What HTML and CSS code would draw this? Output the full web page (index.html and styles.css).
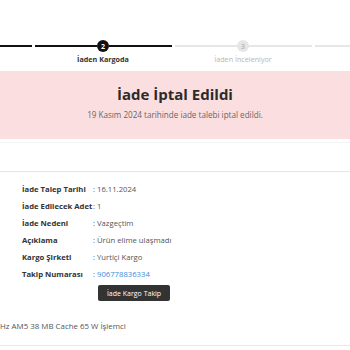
FILE: index.html
```html
<!DOCTYPE html>
<html lang="tr">
<head>
    <meta charset="UTF-8">
    <meta name="viewport" content="width=device-width, initial-scale=1.0">
    <title>İade Detayı</title>
    <link rel="stylesheet" href="styles.css">
</head>
<body>
    <!-- Progress steps (first and last step sit outside the visible area) -->
    <div class="stepper">
        <div class="step done">
            <div class="track"><span class="line"></span><span class="dot"></span><span class="line"></span></div>
            <div class="step-label">&nbsp;</div>
        </div>
        <div class="step current">
            <div class="track"><span class="line"></span><span class="dot">2</span><span class="line"></span></div>
            <div class="step-label">İaden Kargoda</div>
        </div>
        <div class="step">
            <div class="track"><span class="line"></span><span class="dot">3</span><span class="line"></span></div>
            <div class="step-label">İaden İnceleniyor</div>
        </div>
        <div class="step">
            <div class="track"><span class="line"></span><span class="dot"></span><span class="line"></span></div>
            <div class="step-label">&nbsp;</div>
        </div>
    </div>

    <div class="status-box">
        <h2>İade İptal Edildi</h2>
        <p>19 Kasım 2024 tarihinde iade talebi iptal edildi.</p>
    </div>

    <div class="spacer"></div>

    <div class="details">
        <div class="row"><span class="label">İade Talep Tarihi</span><span class="value">: 16.11.2024</span></div>
        <div class="row"><span class="label">İade Edilecek Adet</span><span class="value">: 1</span></div>
        <div class="row"><span class="label">İade Nedeni</span><span class="value">: Vazgeçtim</span></div>
        <div class="row"><span class="label">Açıklama</span><span class="value">: Ürün elime ulaşmadı</span></div>
        <div class="row"><span class="label">Kargo Şirketi</span><span class="value">: Yurtiçi Kargo</span></div>
        <div class="row"><span class="label">Takip Numarası</span><span class="value">: <a href="#" class="track-no">906778836334</a></span></div>
        <button class="track-btn">İade Kargo Takip</button>
    </div>

    <div class="product">Hz AM5 38 MB Cache 65 W İşlemci</div>
</body>
</html>
```

FILE: styles.css
```css
body {
    margin: 0;
    width: 350px;
    overflow: hidden;
    background-color: #ffffff;
    font-family: "Open Sans", Arial, sans-serif;
    color: #333333;
}

/* Progress steps */
.stepper {
    display: flex;
    margin-left: -107px;
    padding-top: 39px;
}
.step {
    flex: 0 0 140px;
    padding: 0 1.5px;
    box-sizing: border-box;
}
.track {
    display: flex;
    align-items: center;
    height: 14px;
}
.line {
    flex: 1;
    height: 2px;
    background: #e6e6e6;
}
.dot {
    width: 12px;
    height: 12px;
    border-radius: 50%;
    background: #e6e6e6;
    color: #bdbdbd;
    font-size: 7px;
    font-weight: 700;
    display: flex;
    align-items: center;
    justify-content: center;
}
.step.done .line,
.step.current .line {
    background: #111111;
}
.step.done .dot,
.step.current .dot {
    background: #111111;
    color: #ffffff;
}
.step-label {
    text-align: center;
    font-size: 7.2px;
    line-height: 11px;
    color: #b5b5b5;
    margin-top: 1px;
}
.step.current .step-label {
    color: #333333;
    font-weight: 700;
}

/* Cancelled box */
.status-box {
    margin-top: 6px;
    background: #fbdfe0;
    text-align: center;
    padding: 13px 0 19px;
}
.status-box h2 {
    margin: 0;
    font-size: 15px;
    line-height: 20px;
    font-weight: 700;
    color: #2b2b2b;
}
.status-box p {
    margin: 5px 0 0;
    font-size: 8.1px;
    line-height: 11px;
    color: #666666;
}

.spacer {
    height: 28px;
    margin-top: 3px;
    border-top: 1px solid #f4f4f4;
    border-bottom: 1px solid #e6e6e6;
}

/* Return details */
.details {
    padding: 8px 0 0 22px;
}
.row {
    display: flex;
    height: 17px;
    align-items: center;
    font-size: 7.7px;
}
.label {
    flex: 0 0 auto;
    min-width: 71px;
    white-space: nowrap;
    font-weight: 700;
    color: #333333;
}
.value {
    color: #555555;
}
.track-no {
    color: #3d8ed9;
    text-decoration: none;
}
.track-btn {
    display: block;
    margin: 3px 0 0 76px;
    width: 72px;
    height: 16px;
    padding: 0;
    background: #333333;
    color: #ffffff;
    border: none;
    border-radius: 2px;
    font-family: inherit;
    font-size: 7px;
}

.product {
    margin-top: 19px;
    padding-bottom: 13px;
    border-bottom: 1px solid #e8e8e8;
    font-size: 7.9px;
    line-height: 12px;
    color: #555555;
}
```
